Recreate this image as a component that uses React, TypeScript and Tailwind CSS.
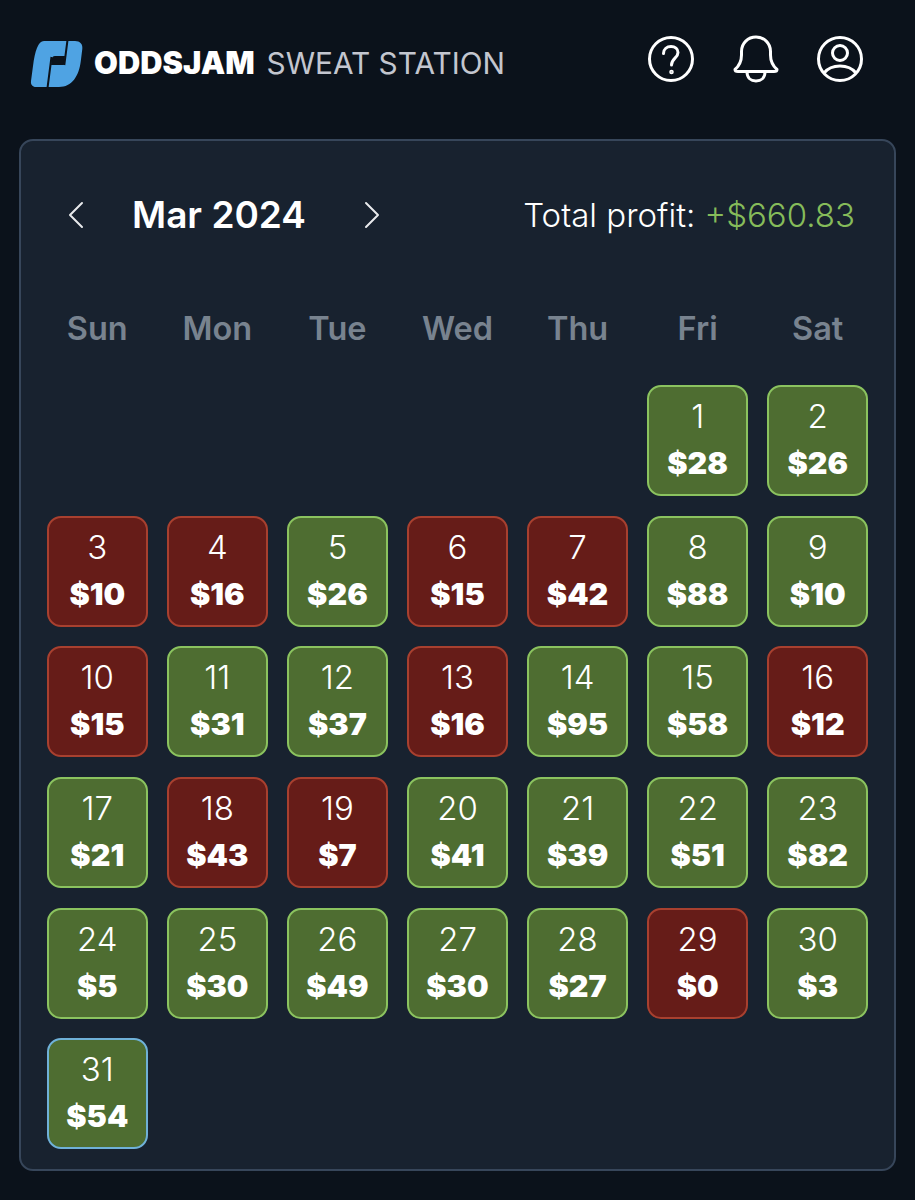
import { ChevronLeft, ChevronRight } from "lucide-react";

const WEEKDAYS = ["Sun", "Mon", "Tue", "Wed", "Thu", "Fri", "Sat"];

// day, amount, won
const DAYS: [number, number, boolean][] = [
  [1, 28, true], [2, 26, true],
  [3, 10, false], [4, 16, false], [5, 26, true], [6, 15, false], [7, 42, false], [8, 88, true], [9, 10, true],
  [10, 15, false], [11, 31, true], [12, 37, true], [13, 16, false], [14, 95, true], [15, 58, true], [16, 12, false],
  [17, 21, true], [18, 43, false], [19, 7, false], [20, 41, true], [21, 39, true], [22, 51, true], [23, 82, true],
  [24, 5, true], [25, 30, true], [26, 49, true], [27, 30, true], [28, 27, true], [29, 0, false], [30, 3, true],
  [31, 54, true],
];

function Logo() {
  return (
    <svg width="54" height="48" viewBox="0 0 54 48" className="shrink-0">
      <path
        d="M14 1H45C50 1 53 4 52.300 9L50.800 21C49 36 42 47 29 47H6C2.500 47 0.500 44.500 1 41L3 26C5 11 8 1 14 1Z"
        fill="#4fa3e3"
      />
      <path d="M25 16H35L33.800 25H21L21.500 20C21.800 17.500 23 16 25 16Z" fill="#0b121b" />
      <path d="M37.500 0L34.300 25M21.500 17L17.500 48" stroke="#0b121b" strokeWidth="2" fill="none" />
    </svg>
  );
}

function HelpIcon() {
  return (
    <svg width="48" height="48" viewBox="0 0 48 48" fill="none" stroke="white" strokeWidth="3" strokeLinecap="round">
      <circle cx="24" cy="24" r="21.500" />
      <path d="M16.500 18.500C16.500 14 20 11.500 24 11.500C28 11.500 31 14 31 17.500C31 23 24.500 23.500 24.500 30" />
      <circle cx="24.500" cy="37" r="0.800" fill="white" />
    </svg>
  );
}

function BellIcon() {
  return (
    <svg width="46" height="48" viewBox="0 0 46 48" fill="none" stroke="white" strokeWidth="3" strokeLinejoin="round">
      <path d="M2 34.500C6 31 8.500 27 8.500 20V16.500C8.500 8 15 2 23 2C31 2 37.500 8 37.500 16.500V20C37.500 27 40 31 44 34.500C44 36 43 36.500 41 36.500H5C3 36.500 2 36 2 34.500Z" />
      <path d="M14 37C14 43 18 46 23 46C28 46 32 43 32 37" />
    </svg>
  );
}

function UserIcon() {
  return (
    <svg width="48" height="48" viewBox="0 0 48 48" fill="none" stroke="white" strokeWidth="3">
      <circle cx="24" cy="24" r="21.500" />
      <circle cx="24" cy="18" r="7.500" />
      <path d="M8 38C12 33 18 31 24 31C30 31 36 33 40 38" />
    </svg>
  );
}

function DayCell({ day, amount, won }: { day: number; amount: number; won: boolean }) {
  const tone = won ? "bg-[#4e6d31] border-[#8bc35f]" : "bg-[#661c18] border-[#a8402f]";
  return (
    <div
      className={`h-[111px] rounded-[14px] border-2 flex flex-col items-center pt-[10px] text-white ${tone} ${
        day === 31 ? "!border-[#6fb1d8]" : ""
      }`}
    >
      <span className="text-[33px] leading-[38px] font-light">{day}</span>
      <span className="text-[30.500px] leading-[38px] mt-[9px] font-black">${amount}</span>
    </div>
  );
}

export default function App() {
  return (
    <div className="w-[915px] h-[1200px] bg-[#0b121b] font-['Inter',sans-serif] overflow-hidden">
      <header className="h-[139px] flex items-start pt-[40px] pl-[30px] pr-[51px]">
        <Logo />
        <span className="ml-[10px] mt-[4px] text-[30.800px] leading-[38px] font-black text-white">ODDSJAM</span>
        <span className="ml-[12px] mt-[4px] text-[29.800px] leading-[38px] font-normal text-[#c3c6cf]">
          SWEAT STATION
        </span>
        <div className="ml-auto flex items-center gap-[37.500px] -mt-[5px]">
          <HelpIcon />
          <BellIcon />
          <UserIcon />
        </div>
      </header>

      <main className="ml-[19px] w-[877px] h-[1032px] rounded-[14px] border-2 border-[#37465a] bg-[#18222f] px-[26px] pt-[51px]">
        <div className="flex items-center h-[46px]">
          <ChevronLeft className="ml-[5px] w-[48px] h-[48px] text-[#e8eaec] shrink-0" strokeWidth={1} />
          <h1 className="ml-[32px] w-[174px] text-[37px] leading-[46px] font-semibold text-white whitespace-nowrap">
            Mar 2024
          </h1>
          <ChevronRight className="ml-[42px] w-[48px] h-[48px] text-[#e8eaec] shrink-0" strokeWidth={1} />
          <p className="ml-auto mr-[13px] text-[33px] leading-[40px] font-light text-white">
            Total profit: <span className="text-[#86bc5a]">+$660.83</span>
          </p>
        </div>

        <div className="grid grid-cols-7 gap-x-[19.500px] mt-[71px]">
          {WEEKDAYS.map((name) => (
            <div key={name} className="text-center text-[32.500px] leading-[40px] font-semibold text-[#78838f]">
              {name}
            </div>
          ))}
        </div>

        <div className="grid grid-cols-7 gap-x-[19.500px] gap-y-[19.700px] mt-[36px]">
          {DAYS.map(([day, amount, won], i) => (
            <div key={day} className={i === 0 ? "col-start-6" : ""}>
              <DayCell day={day} amount={amount} won={won} />
            </div>
          ))}
        </div>
      </main>
    </div>
  );
}
